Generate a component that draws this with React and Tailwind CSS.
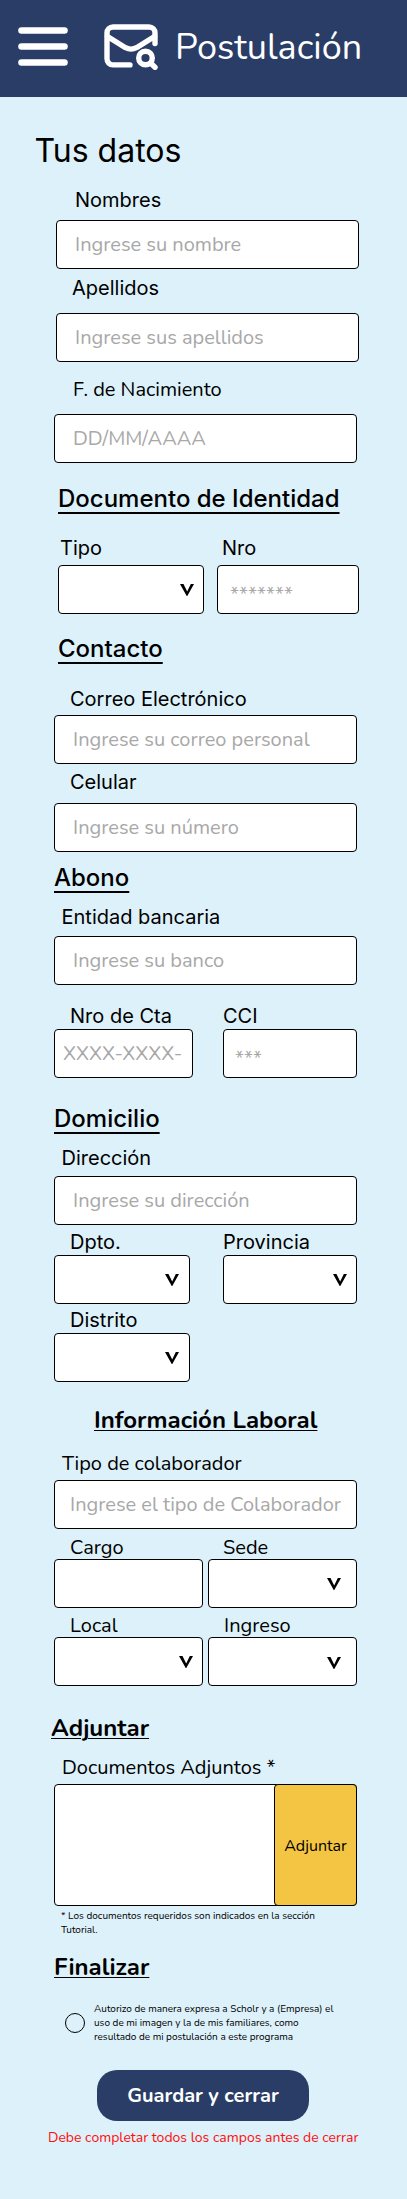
import React from "react";

const inter = "font-['Inter','Liberation_Sans',sans-serif]";
const nunito = "font-['Nunito','Lato',sans-serif]";

function Label({ children, className = "" }) {
  return (
    <div className={`h-6 text-[20px] leading-6 font-normal whitespace-nowrap ${inter} ${className}`}>
      {children}
    </div>
  );
}

function RoundLabel({ children, className = "" }) {
  return (
    <div className={`h-6 text-[20px] leading-[26px] whitespace-nowrap ${nunito} ${className}`}>
      {children}
    </div>
  );
}

function Heading({ children, className = "" }) {
  return (
    <h2
      className={`h-8 text-[24px] leading-[34px] font-medium whitespace-nowrap underline decoration-[1.5px] underline-offset-[4.5px] ${inter} ${className}`}
    >
      {children}
    </h2>
  );
}

function BoldHeading({ children, className = "" }) {
  return (
    <h2
      className={`h-8 text-[24px] leading-8 font-bold whitespace-nowrap underline decoration-1 underline-offset-2 ${nunito} ${className}`}
    >
      {children}
    </h2>
  );
}

function Box({ children, className = "" }) {
  return (
    <div
      className={`flex h-[49px] shrink-0 items-center overflow-hidden rounded-[4px] border border-black bg-white text-[20px] leading-6 whitespace-nowrap text-[#a8a8a8] ${nunito} ${className}`}
    >
      {children}
    </div>
  );
}

function Select({ className = "" }) {
  return (
    <Box className={`justify-end ${className}`}>
      <svg width="14" height="12" viewBox="0 0 14 12" className="text-black">
        <path d="M0 0H3.5L7.2 7.4L10.8 0H14L7.3 12H6.7Z" fill="currentColor" />
      </svg>
    </Box>
  );
}

function MenuIcon() {
  return (
    <svg width="50" height="39" viewBox="0 0 50 39" stroke="white" strokeWidth="6.6" strokeLinecap="round">
      <path d="M3.5 3.5H46.5M3.5 19.5H46.5M3.5 35.5H46.5" />
    </svg>
  );
}

function MailSearchIcon() {
  return (
    <svg
      width="54"
      height="46"
      viewBox="0 0 54 46"
      fill="none"
      stroke="white"
      strokeWidth="5.4"
      strokeLinecap="round"
      strokeLinejoin="round"
    >
      <path d="M51 19.5V9A6 6 0 0 0 45 3H9A6 6 0 0 0 3 9V34.700A6 6 0 0 0 9 40.900H26" />
      <path d="M3.500 12.500L21.500 23.700Q27 26.500 32.500 23.700L50.500 12.500" />
      <circle cx="41.500" cy="34" r="6.800" />
      <path d="M46.800 39.300L51 43.300" />
    </svg>
  );
}

export default function App() {
  return (
    <div className="h-[2199px] w-[407px] overflow-hidden bg-[#ddf1fa] text-black">
      <header className="flex h-[97px] items-start bg-[#2a3d66]">
        <div className="mt-[27px] ml-[18px]">
          <MenuIcon />
        </div>
        <div className="mt-6 ml-9">
          <MailSearchIcon />
        </div>
        <h1 className={`mt-6 ml-[17px] text-[36px] leading-[48px] font-normal text-white ${nunito}`}>
          Postulación
        </h1>
      </header>

      <main>
        <h2 className={`mt-[34px] ml-[34.500px] h-[39px] text-[32px] leading-10 font-normal ${inter}`}>Tus datos</h2>

        <Label className="mt-[18px] ml-[75px]">Nombres</Label>
        <Box className="mt-2 ml-14 w-[303px] pl-[18px]">Ingrese su nombre</Box>
        <Label className="mt-[7px] ml-[72px]">Apellidos</Label>
        <Box className="mt-[13px] ml-14 w-[303px] pl-[18px]">Ingrese sus apellidos</Box>
        <RoundLabel className="mt-[15px] ml-[73px]">F. de Nacimiento</RoundLabel>
        <Box className="mt-[13px] ml-[54px] w-[303px] pl-[18px]">DD/MM/AAAA</Box>

        <Heading className="mt-[19px] ml-[58px]">Documento de Identidad</Heading>
        <div className="mt-[22px] ml-[58px] flex gap-[13px]">
          <div className="w-[146px]">
            <Label className="ml-0.5">Tipo</Label>
            <Select className="mt-[5px] pr-[9px]" />
          </div>
          <div className="w-[142px]">
            <Label className="ml-[5px]">Nro</Label>
            <Box className="mt-[5px] pt-[11px] pl-3">*******</Box>
          </div>
        </div>

        <Heading className="mt-[18px] ml-[58px]">Contacto</Heading>
        <Label className="mt-[23px] ml-[70px]">Correo Electrónico</Label>
        <Box className="mt-1 ml-[54px] w-[303px] pl-[18px]">Ingrese su correo personal</Box>
        <Label className="mt-1.5 ml-[70px]">Celular</Label>
        <Box className="mt-[9px] ml-[54px] w-[303px] pl-[18px]">Ingrese su número</Box>

        <Heading className="mt-[9px] ml-[54px]">Abono</Heading>
        <Label className="mt-3 ml-[61.500px]">Entidad bancaria</Label>
        <Box className="mt-[7px] ml-[54px] w-[303px] pl-[18px]">Ingrese su banco</Box>
        <div className="mt-[19px] ml-[54px] flex gap-[30px]">
          <div className="w-[139px]">
            <Label className="ml-4">Nro de Cta</Label>
            <Box className="mt-px pl-2">XXXX-XXXX-</Box>
          </div>
          <div className="w-[134px]">
            <Label>CCI</Label>
            <Box className="mt-px pt-[11px] pl-[11px]">***</Box>
          </div>
        </div>

        <Heading className="mt-6 ml-[54px]">Domicilio</Heading>
        <Label className="mt-3 ml-[61.500px]">Dirección</Label>
        <Box className="mt-1.5 ml-[54px] w-[303px] pl-[18px]">Ingrese su dirección</Box>
        <div className="mt-[5px] ml-[54px] flex gap-[33px]">
          <div className="w-[136px]">
            <Label className="ml-4">Dpto.</Label>
            <Select className="mt-px pr-2.5" />
          </div>
          <div className="w-[134px]">
            <Label>Provincia</Label>
            <Select className="mt-px pr-[9px]" />
          </div>
        </div>
        <Label className="mt-1 ml-[70px]">Distrito</Label>
        <Select className="mt-px ml-[54px] w-[136px] pr-2.5" />

        <BoldHeading className="mt-[22px] ml-[94px]">Información Laboral</BoldHeading>
        <RoundLabel className="mt-[15px] ml-[62px]">Tipo de colaborador</RoundLabel>
        <Box className="mt-[5px] ml-[54px] w-[303px] pl-[15px]">Ingrese el tipo de Colaborador</Box>
        <div className="mt-1.5 ml-[54px] flex gap-[5px]">
          <div className="w-[149px]">
            <RoundLabel className="ml-4">Cargo</RoundLabel>
            <Box />
          </div>
          <div className="w-[149px]">
            <RoundLabel className="ml-[15px]">Sede</RoundLabel>
            <Select className="pr-[15px]" />
          </div>
        </div>
        <div className="mt-[5px] ml-[54px] flex gap-[5px]">
          <div className="w-[149px]">
            <RoundLabel className="ml-4">Local</RoundLabel>
            <Select className="pr-[9px]" />
          </div>
          <div className="w-[149px]">
            <RoundLabel className="ml-4">Ingreso</RoundLabel>
            <Select className="pt-0.5 pr-[15px]" />
          </div>
        </div>

        <BoldHeading className="mt-[26px] ml-[51px]">Adjuntar</BoldHeading>
        <RoundLabel className="mt-[11px] ml-[62px]">Documentos Adjuntos *</RoundLabel>
        <div className="mt-[5px] ml-[54px] flex h-[122px] w-[303px] justify-end rounded-[4px] border border-black bg-white">
          <button
            type="button"
            className={`-my-px -mr-px w-[83px] rounded-[4px] border border-black bg-[#f4c542] pt-0.5 text-[16px] ${nunito}`}
          >
            Adjuntar
          </button>
        </div>
        <p className={`mt-[3px] ml-[61px] w-[270px] text-[10px] leading-[14px] ${nunito}`}>
          * Los documentos requeridos son indicados en la sección Tutorial.
        </p>

        <BoldHeading className="mt-3.5 ml-[54px]">Finalizar</BoldHeading>
        <div className="mt-[19px] ml-[65px] flex items-center gap-[9px]">
          <span className="size-5 rounded-full border border-black" />
          <p className={`text-[10px] leading-[14px] whitespace-nowrap ${nunito}`}>
            Autorizo de manera expresa a Scholr y a (Empresa) el
            <br />
            uso de mi imagen y la de mis familiares, como
            <br />
            resultado de mi postulación a este programa
          </p>
        </div>
        <button
          type="button"
          className={`mt-[26px] ml-[97px] block h-[51px] w-[212px] rounded-[20px] bg-[#2a3d66] text-[20px] font-bold text-white ${nunito}`}
        >
          Guardar y cerrar
        </button>
        <p className={`mt-1.5 ml-12 text-[14px] leading-[21px] whitespace-nowrap text-[#ff0c0c] ${nunito}`}>
          Debe completar todos los campos antes de cerrar
        </p>
      </main>
    </div>
  );
}
